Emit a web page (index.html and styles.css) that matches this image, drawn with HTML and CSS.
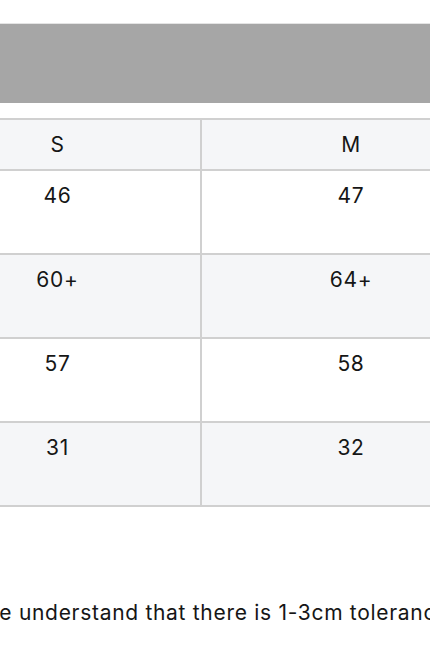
FILE: index.html
```html
<!DOCTYPE html>
<html lang="en">
<head>
<meta charset="utf-8">
<title>Size chart</title>
<link rel="stylesheet" href="styles.css">
</head>
<body>
<main class="page">
  <div class="banner"></div>
  <div class="table-wrap">
    <table class="size-table">
      <colgroup>
        <col class="col-s">
        <col class="col-m">
      </colgroup>
      <thead>
        <tr><th>S</th><th>M</th></tr>
      </thead>
      <tbody>
        <tr><td>46</td><td>47</td></tr>
        <tr class="alt"><td>60+</td><td>64+</td></tr>
        <tr><td>57</td><td>58</td></tr>
        <tr class="alt"><td>31</td><td>32</td></tr>
      </tbody>
    </table>
  </div>
  <p class="note">We understand that there is 1-3cm tolerance due to manual measurement.</p>
</main>
</body>
</html>
```
FILE: styles.css
```css
html, body {
  margin: 0;
  padding: 0;
  overflow: hidden;
  background: #ffffff;
}
body {
  font-family: Inter, "Noto Sans", sans-serif;
  font-size: 21px;
  line-height: 30px;
  letter-spacing: 0.7px;
  color: #161616;
}
.page {
  padding-top: 23px;
}
.banner {
  height: 79px;
  background: #a6a6a6;
  border-top: 1px solid #e4e4e4;
}
.table-wrap {
  margin: 15px 0 0 -87px;
}
.size-table {
  border-collapse: collapse;
  table-layout: fixed;
  width: 587px;
}
.col-s { width: 287px; }
.col-m { width: 300px; }
.size-table th,
.size-table td {
  border: 2px solid #d0d0d0;
  text-align: center;
  font-weight: 400;
  padding: 0;
}
.size-table th {
  height: 49px;
  background: #f5f6f8;
  vertical-align: middle;
}
.size-table td {
  height: 72px;
  padding-top: 10px;
  vertical-align: top;
  background: #ffffff;
}
.size-table tr.alt td {
  background: #f5f6f8;
}
.note {
  margin: 91px 0 0 -21px;
  white-space: nowrap;
}
```
